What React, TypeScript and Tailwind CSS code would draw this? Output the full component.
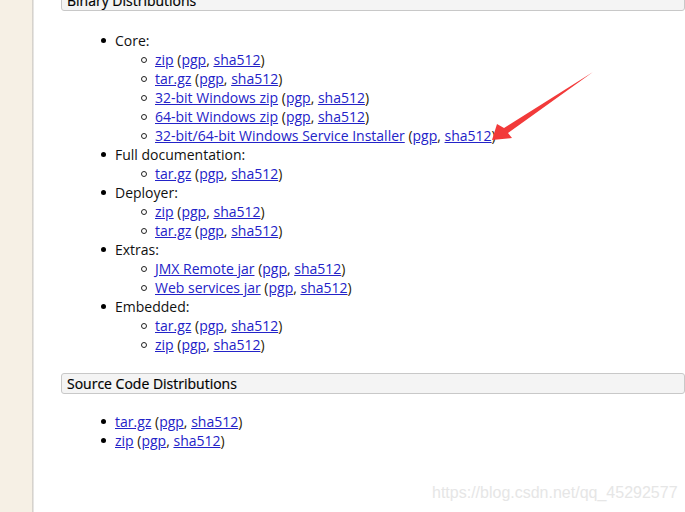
import React from 'react';

const font = { fontFamily: '"Open Sans", "Noto Sans", sans-serif' };

const Links: React.FC<{ label: string }> = ({ label }) => (
  <span>
    <a className="text-[#2323c8] underline">{label}</a>{' '}
    <span className="text-[#2a1a00]">(</span>
    <a className="text-[#2323c8] underline">pgp</a>
    <span className="text-[#2a1a00]">, </span>
    <a className="text-[#2323c8] underline">sha512</a>
    <span className="text-[#2a1a00]">)</span>
  </span>
);

const groups: { title: string; items: string[] }[] = [
  { title: 'Core:', items: ['zip', 'tar.gz', '32-bit Windows zip', '64-bit Windows zip', '32-bit/64-bit Windows Service Installer'] },
  { title: 'Full documentation:', items: ['tar.gz'] },
  { title: 'Deployer:', items: ['zip', 'tar.gz'] },
  { title: 'Extras:', items: ['JMX Remote jar', 'Web services jar'] },
  { title: 'Embedded:', items: ['tar.gz', 'zip'] },
];

const Disc = () => (
  <span className="w-[14px] shrink-0 flex items-center">
    <span className="w-[5px] h-[5px] rounded-full bg-black" />
  </span>
);

const Circle = () => (
  <span className="w-[14px] shrink-0 flex items-center">
    <span className="w-[6px] h-[6px] rounded-full border-[1.5px] border-[#222]" />
  </span>
);

const Header: React.FC<{ title: string; className?: string }> = ({ title, className }) => (
  <div className={`h-[21px] ml-[27px] pl-[5px] bg-[#f4f4f4] border border-[#c8c8c8] rounded-[3px] flex items-center text-[14px] text-[#000] [-webkit-text-stroke:0.2px_#000] ${className || ''}`}>
    {title}
  </div>
);

export default function App() {
  return (
    <div className="w-[685px] h-[512px] flex overflow-hidden bg-white relative text-[14px] leading-[19px]" style={font}>
      <div className="w-[32px] shrink-0 bg-[#f6f0e5]" />
      <div className="w-[2px] shrink-0 bg-gradient-to-r from-[#cfcac2] to-[#eeeeee]" />
      <div className="flex-1 flex flex-col">
        <Header title="Binary Distributions" className="-mt-[10px]" />
        <div className="mt-[20px] ml-[67px] flex flex-col text-[#111]">
          {groups.map((g) => (
            <div key={g.title} className="flex flex-col">
              <div className="flex h-[19px]">
                <Disc />
                <span>{g.title}</span>
              </div>
              {g.items.map((it, i) => (
                <div key={i} className="flex h-[19px] pl-[40px]">
                  <Circle />
                  <Links label={it} />
                </div>
              ))}
            </div>
          ))}
        </div>
        <Header title="Source Code Distributions" className="mt-[19px]" />
        <div className="mt-[18px] ml-[67px] flex flex-col">
          {['tar.gz', 'zip'].map((it) => (
            <div key={it} className="flex h-[19px]">
              <Disc />
              <Links label={it} />
            </div>
          ))}
        </div>
      </div>
      {/* red annotation arrow */}
      <svg className="absolute left-0 top-0 pointer-events-none" width="685" height="512">
        <polygon points="492,140 497,124 504,128 593,72 508,133 512,138" fill="#f23a3a" />
      </svg>
      <div className="absolute left-[432px] top-[483px] text-[16px] text-[#e6e6e6]" style={{ fontFamily: '"Liberation Sans", Arial, sans-serif' }}>
        https://blog.csdn.net/qq_45292577
      </div>
    </div>
  );
}
